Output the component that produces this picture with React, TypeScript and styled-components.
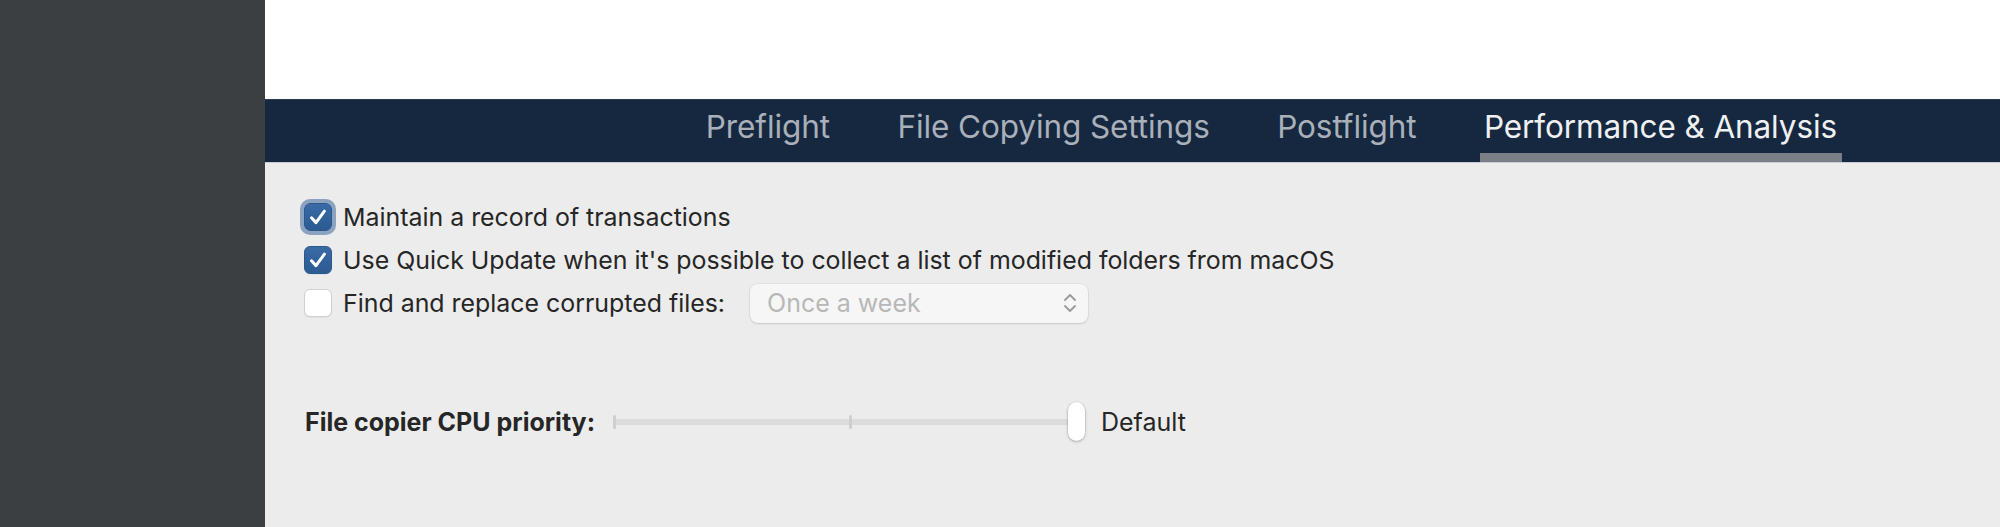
import React from "react";
import styled, { createGlobalStyle } from "styled-components";

const GlobalStyle = createGlobalStyle`
  html, body {
    margin: 0;
    padding: 0;
    background: #ececec;
  }
  body {
    font-family: Inter, "Liberation Sans", Arial, sans-serif;
    -webkit-font-smoothing: antialiased;
  }
`;

const tabs = ["Preflight", "File Copying Settings", "Postflight", "Performance & Analysis"];

interface OptionItem {
  label: string;
  checked: boolean;
  focused?: boolean;
}

const options: OptionItem[] = [
  { label: "Maintain a record of transactions", checked: true, focused: true },
  { label: "Use Quick Update when it's possible to collect a list of modified folders from macOS", checked: true },
];

const CheckIcon = () => (
  <svg width="22" height="22" viewBox="0 0 22 22" fill="none">
    <path
      d="M4.5 11.8 L9 16.6 L17.4 5.2"
      stroke="#fff"
      strokeWidth="3"
      strokeLinecap="round"
      strokeLinejoin="round"
    />
  </svg>
);

const Chevrons = () => (
  <svg width="16" height="22" viewBox="0 0 16 22" fill="none">
    <path d="M3 8 L8 3 L13 8" stroke="#9a9a9a" strokeWidth="1.8" strokeLinecap="round" strokeLinejoin="round" />
    <path d="M3 14 L8 19 L13 14" stroke="#9a9a9a" strokeWidth="1.8" strokeLinecap="round" strokeLinejoin="round" />
  </svg>
);

const App: React.FC = () => {
  const activeTab = 3;

  return (
    <>
      <GlobalStyle />
      <Window>
        <Sidebar />
        <Main>
          <TopArea />
          <TabBar>
            {tabs.map((t, i) => (
              <Tab key={t} active={i === activeTab}>
                {t}
              </Tab>
            ))}
          </TabBar>
          <Content>
            <OptionList>
              {options.map((o) => (
                <OptionRow key={o.label}>
                  <Checkbox checked={o.checked} focused={o.focused}>
                    {o.checked && <CheckIcon />}
                  </Checkbox>
                  <Label>{o.label}</Label>
                </OptionRow>
              ))}
              <OptionRow>
                <Checkbox checked={false} />
                <Label>Find and replace corrupted files:</Label>
                <Select>
                  <SelectText>Once a week</SelectText>
                  <Chevrons />
                </Select>
              </OptionRow>
            </OptionList>
            <SliderRow>
              <SliderLabel>File copier CPU priority:</SliderLabel>
              <Slider>
                <Track />
                <Tick pos={0} />
                <Tick pos={50} />
                <Thumb />
              </Slider>
              <SliderValue>Default</SliderValue>
            </SliderRow>
          </Content>
        </Main>
      </Window>
    </>
  );
};

const Window = styled.div`
  display: flex;
  width: 2000px;
  height: 527px;
  overflow: hidden;
`;

const Sidebar = styled.div`
  width: 265px;
  flex-shrink: 0;
  background-color: #3b3f42;
`;

const Main = styled.div`
  flex: 1;
  display: flex;
  flex-direction: column;
`;

const TopArea = styled.div`
  height: 99px;
  background-color: #fff;
`;

const TabBar = styled.div`
  height: 64px;
  box-sizing: border-box;
  background-color: #16283f;
  border-top: 1px solid #2c3b50;
  border-bottom: 1px solid #c9ccd0;
  display: flex;
  align-items: stretch;
  justify-content: flex-end;
  padding-right: 158px;
  gap: 58.5px;
`;

const Tab = styled.div<{ active?: boolean }>`
  display: flex;
  align-items: center;
  padding: 0 5px 3px 4px;
  font-size: 31.5px;
  letter-spacing: -0.1px;
  color: ${(p) => (p.active ? "#eef0f2" : "#a9b0ba")};
  border-bottom: 9px solid ${(p) => (p.active ? "#7a7f87" : "transparent")};
  margin-top: 3px;
`;

const Content = styled.div`
  flex: 1;
  background-color: #ececec;
  padding: 40px 0 0 39px;
`;

const OptionList = styled.div`
  display: flex;
  flex-direction: column;
  gap: 15px;
`;

const OptionRow = styled.div`
  display: flex;
  align-items: center;
  height: 28px;
`;

const Checkbox = styled.div<{ checked?: boolean; focused?: boolean }>`
  width: 28px;
  height: 28px;
  box-sizing: border-box;
  border-radius: 6px;
  display: flex;
  align-items: center;
  justify-content: center;
  flex-shrink: 0;
  background: ${(p) => (p.checked ? "linear-gradient(#3a6ba4, #2c5a93)" : "#fff")};
  border: 1px solid ${(p) => (p.checked ? "#2b578d" : "#d0d0d0")};
  box-shadow: ${(p) => (p.focused ? "0 0 0 4px rgba(62, 104, 156, 0.55)" : "0 1px 1px rgba(0,0,0,0.05)")};
`;

const Label = styled.span`
  margin-left: 11px;
  font-size: 24.9px;
  color: #262626;
  white-space: nowrap;
`;

const Select = styled.div`
  margin-left: 25px;
  width: 338px;
  height: 39px;
  box-sizing: border-box;
  border-radius: 8px;
  background-color: #f6f6f6;
  box-shadow: 0 0 0 1px rgba(0, 0, 0, 0.04), 0 1px 2px rgba(0, 0, 0, 0.12);
  display: flex;
  align-items: center;
  justify-content: space-between;
  padding: 0 10px 0 17px;
`;

const SelectText = styled.span`
  font-size: 25px;
  color: #b8b8b8;
`;

const SliderRow = styled.div`
  display: flex;
  align-items: center;
  margin-top: 85px;
  height: 40px;
`;

const SliderLabel = styled.span`
  margin-left: 1px;
  font-size: 25px;
  font-weight: 700;
  color: #262626;
  white-space: nowrap;
`;

const Slider = styled.div`
  position: relative;
  margin-left: 18px;
  width: 472px;
  height: 40px;
`;

const Track = styled.div`
  position: absolute;
  left: 0;
  right: 8px;
  top: 17px;
  height: 6px;
  border-radius: 3px;
  background-color: #dcdcdc;
`;

const Tick = styled.div<{ pos: number }>`
  position: absolute;
  top: 13px;
  left: ${(p) => `${p.pos}%`};
  width: 3px;
  height: 14px;
  border-radius: 2px;
  background-color: #cfcfcf;
`;

const Thumb = styled.div`
  position: absolute;
  right: 0;
  top: 0;
  width: 17px;
  height: 39px;
  border-radius: 9px;
  background-color: #fff;
  box-shadow: 0 0 0 0.5px rgba(0, 0, 0, 0.12), 0 1px 3px rgba(0, 0, 0, 0.25);
`;

const SliderValue = styled.span`
  margin-left: 16px;
  font-size: 25px;
  color: #262626;
`;

export default App;
